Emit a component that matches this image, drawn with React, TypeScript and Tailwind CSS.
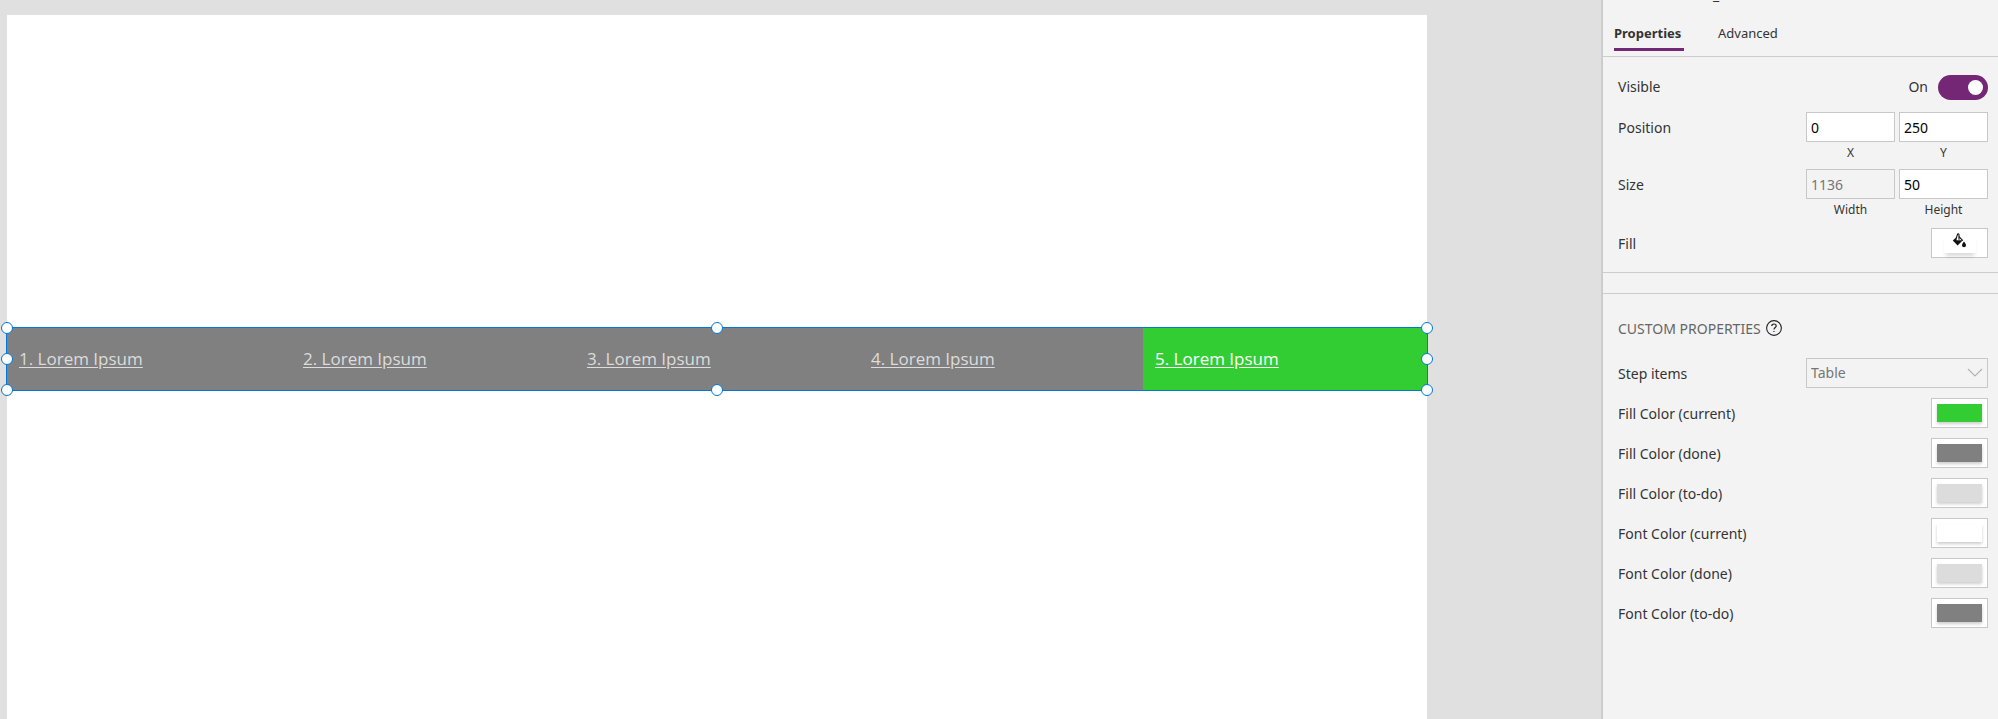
import { useState } from "react";
import type { ReactNode } from "react";

const steps = ["1. Lorem Ipsum", "2. Lorem Ipsum", "3. Lorem Ipsum", "4. Lorem Ipsum", "5. Lorem Ipsum"];
const currentStep = 4;

const handlePlaces = [
  "left-0 top-0",
  "left-1/2 top-0",
  "left-full top-0",
  "left-0 top-1/2",
  "left-full top-1/2",
  "left-0 top-full",
  "left-1/2 top-full",
  "left-full top-full",
];

const colorProperties = [
  { label: "Fill Color (current)", swatch: "bg-[#32cd32]" },
  { label: "Fill Color (done)", swatch: "bg-[#808080]" },
  { label: "Fill Color (to-do)", swatch: "bg-[#dcdcdc]" },
  { label: "Font Color (current)", swatch: "bg-white" },
  { label: "Font Color (done)", swatch: "bg-[#dcdcdc]" },
  { label: "Font Color (to-do)", swatch: "bg-[#808080]" },
];

function Stepper() {
  return (
    <nav aria-label="Steps" className="relative h-16">
      <ol className="grid h-full grid-cols-5">
        {steps.map((step, i) => (
          <li
            key={step}
            className={
              i === currentStep
                ? "flex items-center bg-[#32cd32] px-3 text-white"
                : "flex items-center bg-[#808080] px-3 text-[#dcdcdc]"
            }
          >
            <a href="#" className="text-[17px] leading-6 underline underline-offset-2">
              {step}
            </a>
          </li>
        ))}
      </ol>
      <div className="pointer-events-none absolute -inset-x-px inset-y-0 border border-[#0078d7]">
        {handlePlaces.map((place) => (
          <span
            key={place}
            className={`absolute size-3 -translate-x-1/2 -translate-y-1/2 rounded-full border border-[#0078d7] bg-white ${place}`}
          />
        ))}
      </div>
    </nav>
  );
}

function NumberBox({ id, label, value, disabled }: { id: string; label: string; value: string; disabled?: boolean }) {
  return (
    <div className="flex flex-1 flex-col items-center">
      <input
        id={id}
        type="text"
        defaultValue={value}
        disabled={disabled}
        className="h-[30px] w-full border border-[#c8c8c8] bg-white px-1 text-sm text-black disabled:bg-[#f3f3f3] disabled:text-[#767676]"
      />
      <label htmlFor={id} className="pt-px text-xs leading-5">
        {label}
      </label>
    </div>
  );
}

function Row({ label, children }: { label: ReactNode; children: ReactNode }) {
  return (
    <div className="flex justify-between">
      <div className="flex h-8 items-center">{label}</div>
      {children}
    </div>
  );
}

function PaintIcon() {
  return (
    <svg viewBox="0 0 15 15" className="size-[15px]" aria-hidden="true">
      <path d="M4.2 5.5 5.4 1.6C5.7.6 7 .7 7 1.8v5" fill="none" stroke="#111" strokeWidth="1.1" />
      <path d="M7 3.6 10.8 7.6" fill="none" stroke="#111" strokeWidth="1.1" />
      <path d="M.8 7.6 4.6 4v3.2h6.2L5.6 12.6Z" fill="#111" />
      <path d="M12 8.4c1.1 1.6 2 2.7 2 3.9a2 2 0 0 1-4 0c0-1.2.9-2.3 2-3.9Z" fill="#111" />
    </svg>
  );
}

function HelpIcon() {
  return (
    <svg viewBox="0 0 16 16" className="size-4" fill="none" stroke="#222" aria-hidden="true">
      <circle cx="8" cy="8" r="7.4" strokeWidth="1.1" />
      <path d="M5.8 6.1c0-1.3.9-2.1 2.2-2.1s2.2.8 2.2 1.9c0 1.5-2.2 1.8-2.2 3.7" strokeWidth="1.2" />
      <path d="M8 10.9v1.2" strokeWidth="1.2" />
    </svg>
  );
}

export default function App() {
  const [visible, setVisible] = useState(true);

  return (
    <div className="flex h-screen overflow-hidden bg-[#e0e0e0] font-['Open_Sans','Noto_Sans',sans-serif] text-sm text-[#333]">
      <main className="flex min-w-0 flex-1 pl-[7px] pr-[174px] pt-[15px]">
        <div className="flex-1 bg-white pt-[312px]">
          <Stepper />
        </div>
      </main>

      <aside className="w-[397px] shrink-0 border-l-2 border-[#cccccc] bg-[#f3f3f3] font-['Noto_Sans','Open_Sans',sans-serif]">
        <div className="flex h-[2px] items-end pl-[110px] leading-none">
          <span>_</span>
        </div>
        <div role="tablist" className="flex h-[55px] items-end gap-[34px] border-b border-[#cccccc] px-[11px] pb-[5px] text-[13px]">
          <button role="tab" aria-selected="true" className="min-w-[70px] border-b-[3px] border-[#742774] pb-[5px] text-left font-bold leading-5">
            Properties
          </button>
          <button role="tab" aria-selected="false" className="border-b-[3px] border-transparent pb-[5px] leading-5">
            Advanced
          </button>
        </div>

        <section className="flex flex-col border-b border-[#cccccc] pb-3 pl-[15px] pr-[10px] pt-[14px]">
          <Row label={<label htmlFor="visible">Visible</label>}>
            <div className="flex h-8 items-center gap-[10px]">
              <span>On</span>
              <label className="flex h-[25px] w-[50px] cursor-pointer items-center rounded-full bg-[#888] px-[5px] has-checked:justify-end has-checked:bg-[#742774]">
                <input
                  id="visible"
                  type="checkbox"
                  role="switch"
                  checked={visible}
                  onChange={(e) => setVisible(e.target.checked)}
                  className="sr-only"
                />
                <span className="size-[15px] rounded-full bg-white" />
              </label>
            </div>
          </Row>
          <div className="mt-[9px]">
            <Row label="Position">
              <div className="flex w-[182px] gap-1">
                <NumberBox id="pos-x" label="X" value="0" />
                <NumberBox id="pos-y" label="Y" value="250" />
              </div>
            </Row>
          </div>
          <div className="mt-[6px]">
            <Row label="Size">
              <div className="flex w-[182px] gap-1">
                <NumberBox id="size-w" label="Width" value="1136" disabled />
                <NumberBox id="size-h" label="Height" value="50" />
              </div>
            </Row>
          </div>
          <div className="mt-2">
            <Row label="Fill">
              <button aria-label="Fill" className="flex h-[30px] w-[57px] items-center justify-center border border-[#c8c8c8] bg-white">
                <span className="flex h-5 w-8 justify-center bg-white shadow-[0_5px_4px_-2px_rgba(0,0,0,0.15)]">
                  <PaintIcon />
                </span>
              </button>
            </Row>
          </div>
        </section>

        <section className="mt-5 border-t border-[#cccccc] pb-6 pl-[15px] pr-[10px] pt-6">
          <h2 className="flex h-5 items-center gap-[5px] text-[#666]">
            <span className="pt-px">CUSTOM PROPERTIES</span>
            <button aria-label="Help">
              <HelpIcon />
            </button>
          </h2>
          <div className="flex flex-col gap-2 pt-5">
            <Row label={<label htmlFor="step-items">Step items</label>}>
              <div className="relative">
                <select
                  id="step-items"
                  disabled
                  className="h-[30px] w-[182px] appearance-none border border-[#c8c8c8] bg-[#f3f3f3] px-1 text-[#767676] opacity-100"
                >
                  <option>Table</option>
                </select>
                <svg viewBox="0 0 16 10" className="absolute right-[5px] top-[10px] h-[10px] w-4" fill="none" stroke="#b4b4b4" strokeWidth="1.2" aria-hidden="true">
                  <path d="m1 1 7 7 7-7" />
                </svg>
              </div>
            </Row>
            {colorProperties.map(({ label, swatch }) => (
              <Row key={label} label={label}>
                <button aria-label={label} className="flex h-[30px] w-[57px] justify-center border border-[#c8c8c8] bg-white pt-[5px]">
                  <span className={`h-[18px] w-[45px] shadow-[0_2px_3px_rgba(0,0,0,0.2)] ${swatch}`} />
                </button>
              </Row>
            ))}
          </div>
        </section>
      </aside>
    </div>
  );
}
